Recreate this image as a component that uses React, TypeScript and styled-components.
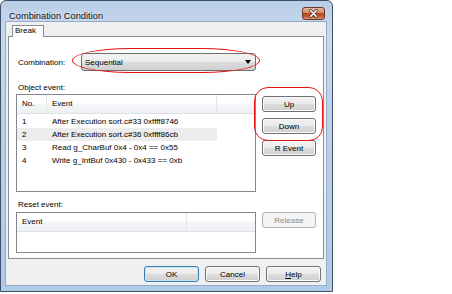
import React from "react";
import styled, { createGlobalStyle } from "styled-components";

const GlobalStyle = createGlobalStyle`
  html, body {
    margin: 0;
    padding: 0;
    background: #ffffff;
  }
  body {
    font-family: "Liberation Sans", Arial, sans-serif;
    font-size: 8px;
    color: #000;
  }
`;

type Row = { no: string; event: string };

const objectEvents: Row[] = [
  { no: "1", event: "After Execution sort.c#33 0xffff8746" },
  { no: "2", event: "After Execution sort.c#36 0xffff86cb" },
  { no: "3", event: "Read g_CharBuf 0x4 - 0x4 == 0x55" },
  { no: "4", event: "Write g_IntBuf 0x430 - 0x433 == 0xb" },
];

const CloseIcon = () => (
  <svg width="23" height="13" viewBox="0 0 23 13">
    <defs>
      <linearGradient id="closeBg" x1="0" y1="0" x2="0" y2="1">
        <stop offset="0" stopColor="#e6bba3" />
        <stop offset="0.42" stopColor="#d38f70" />
        <stop offset="0.5" stopColor="#b44722" />
        <stop offset="0.75" stopColor="#c25c38" />
        <stop offset="1" stopColor="#e3a585" />
      </linearGradient>
    </defs>
    <rect x="0.5" y="0.5" width="22" height="12" rx="2.5" fill="url(#closeBg)" stroke="#6b3a2a" />
    <path d="M8.5 3.5 L14.5 9.5 M14.5 3.5 L8.5 9.5" stroke="#4a2a20" strokeWidth="3" strokeLinecap="round" />
    <path d="M8.5 3.5 L14.5 9.5 M14.5 3.5 L8.5 9.5" stroke="#ffffff" strokeWidth="1.6" strokeLinecap="round" />
  </svg>
);

const App: React.FC = () => {
  return (
    <>
      <GlobalStyle />
      <Page>
        <Window>
          <TitleBar>
            <Title>Combination Condition</Title>
            <CloseButton>
              <CloseIcon />
            </CloseButton>
          </TitleBar>
          <Client>
            <TabStrip>
              <Tab>Break</Tab>
            </TabStrip>
            <Panel>
              <ComboRow>
                <ComboLabel>Combination:</ComboLabel>
                <Select>
                  <span>Sequential</span>
                  <Arrow />
                </Select>
              </ComboRow>

              <SectionLabel>Object event:</SectionLabel>
              <Section $gap={1}>
                <ListBox $height={98}>
                  <Header>
                    <HeadCell $width={30}>No.</HeadCell>
                    <HeadCell $width={170}>Event</HeadCell>
                    <HeadFill />
                  </Header>
                  <Rows>
                    {objectEvents.map((r, i) => (
                      <ItemRow key={r.no} $hover={i === 1}>
                        <Cell $width={30}>{r.no}</Cell>
                        <Cell $width={170}>{r.event}</Cell>
                      </ItemRow>
                    ))}
                  </Rows>
                </ListBox>
                <ButtonColumn $top={2}>
                  <Button>Up</Button>
                  <Button>Down</Button>
                  <Button>R Event</Button>
                </ButtonColumn>
              </Section>

              <SectionLabel $top={8}>Reset event:</SectionLabel>
              <Section $gap={2}>
                <ListBox $height={41}>
                  <Header>
                    <HeadCell $width={170}>Event</HeadCell>
                    <HeadFill />
                  </Header>
                </ListBox>
                <ButtonColumn $top={0}>
                  <Button disabled>Release</Button>
                </ButtonColumn>
              </Section>
            </Panel>

            <Footer>
              <Button $default>OK</Button>
              <Button>Cancel</Button>
              <Button>
                <u>H</u>elp
              </Button>
            </Footer>
          </Client>
        </Window>

        <Highlight $left={72} $top={48} $width={188} $height={25} $radius="60px / 13px" />
        <Highlight $left={254} $top={87} $width={69} $height={54} $radius="14px" />
      </Page>
    </>
  );
};

const Page = styled.div`
  position: relative;
  width: 452px;
  height: 294px;
  background: #fff;
`;

const Window = styled.div`
  box-sizing: border-box;
  width: 333px;
  height: 292px;
  display: flex;
  flex-direction: column;
  padding: 0 6px 6px 5px;
  border: 1px solid #3f5068;
  border-radius: 6px 6px 0 0;
  background: linear-gradient(180deg, #b9cee7 0%, #c9daee 12%, #bcd1e9 40%, #aecbe8 100%);
`;

const TitleBar = styled.div`
  height: 21px;
  display: flex;
  justify-content: space-between;
  align-items: flex-start;
  padding-left: 3px;
`;

const Title = styled.div`
  font-size: 9.3px;
  line-height: 10px;
  margin-top: 10px;
  color: #111;
  text-shadow: 0 0 4px rgba(255, 255, 255, 0.9);
`;

const CloseButton = styled.div`
  margin-top: 6px;
  margin-right: 1px;
  width: 23px;
  height: 13px;
  line-height: 0;
`;

const Client = styled.div`
  flex: 1;
  display: flex;
  flex-direction: column;
  background: #f0f0f0;
  padding: 3px 3px 3px 2px;
  box-shadow: 0 0 0 1px #93abc8;
`;

const TabStrip = styled.div`
  display: flex;
  height: 11px;
  padding-left: 4px;
`;

const Tab = styled.div`
  position: relative;
  z-index: 1;
  box-sizing: border-box;
  width: 32px;
  height: 12px;
  border: 1px solid #898c95;
  border-bottom: none;
  background: #fff;
  font-size: 8px;
  line-height: 10px;
  padding-left: 2px;
`;

const Panel = styled.div`
  box-sizing: border-box;
  width: 316px;
  height: 223px;
  border: 1px solid #898c95;
  background: #fff;
  padding: 16px 6px 0 7px;
  display: flex;
  flex-direction: column;
`;

const ComboRow = styled.div`
  display: flex;
  align-items: center;
  width: 240px;
  height: 18px;
`;

const ComboLabel = styled.div`
  width: 65px;
  padding-left: 2px;
  box-sizing: border-box;
`;

const Select = styled.div`
  box-sizing: border-box;
  width: 175px;
  height: 18px;
  display: flex;
  align-items: center;
  justify-content: space-between;
  padding: 0 4px 0 3px;
  border: 1px solid #707070;
  border-radius: 3px;
  background: linear-gradient(180deg, #f2f2f2 0%, #ebebeb 50%, #dddddd 51%, #cfcfcf 100%);
`;

const Arrow = styled.span`
  width: 0;
  height: 0;
  border-left: 3.5px solid transparent;
  border-right: 3.5px solid transparent;
  border-top: 4px solid #000;
`;

const SectionLabel = styled.div<{ $top?: number }>`
  margin-top: ${(p) => p.$top ?? 12}px;
  line-height: 10px;
  padding-left: 2px;
`;

const Section = styled.div<{ $gap: number }>`
  display: flex;
  gap: 6px;
  margin-top: ${(p) => p.$gap}px;
`;

const ListBox = styled.div<{ $height: number }>`
  box-sizing: border-box;
  width: 240px;
  height: ${(p) => p.$height}px;
  border: 1px solid #828790;
  background: #fff;
  overflow: hidden;
`;

const Header = styled.div`
  display: flex;
  height: 18px;
  background: linear-gradient(180deg, #ffffff 0%, #ffffff 45%, #f3f4f6 55%, #eef0f3 100%);
  border-bottom: 1px solid #dde0e5;
`;

const HeadCell = styled.div<{ $width: number }>`
  box-sizing: border-box;
  width: ${(p) => p.$width}px;
  padding-left: 5px;
  line-height: 18px;
  border-right: 1px solid #e3e5e8;
`;

const HeadFill = styled.div`
  flex: 1;
`;

const Rows = styled.div`
  padding-top: 1px;
`;

const ItemRow = styled.div<{ $hover?: boolean }>`
  display: flex;
  width: 200px;
  height: 13px;
  line-height: 13px;
  background: ${(p) => (p.$hover ? "#ececec" : "transparent")};
`;

const Cell = styled.div<{ $width: number }>`
  width: ${(p) => p.$width}px;
  padding-left: 5px;
  box-sizing: border-box;
  white-space: nowrap;
`;

const ButtonColumn = styled.div<{ $top: number }>`
  display: flex;
  flex-direction: column;
  gap: 6px;
  width: 54px;
  padding-top: ${(p) => p.$top}px;
`;

const Button = styled.button<{ $default?: boolean }>`
  box-sizing: border-box;
  width: 54px;
  height: 16px;
  padding: 0;
  font-family: "Liberation Sans", Arial, sans-serif;
  font-size: 8px;
  color: #000;
  border: 1px solid ${(p) => (p.$default ? "#3c7fb1" : "#707070")};
  border-radius: 3px;
  background: linear-gradient(180deg, #f2f2f2 0%, #ebebeb 50%, #dddddd 51%, #cfcfcf 100%);
  box-shadow: inset 0 0 0 1px ${(p) => (p.$default ? "#c4e5f6" : "#fbfbfb")};

  &:disabled {
    color: #8a8a8a;
    border-color: #adb2b5;
    background: #f4f4f4;
    box-shadow: none;
  }

  u {
    text-decoration: underline;
  }
`;

const Footer = styled.div`
  display: flex;
  justify-content: flex-end;
  gap: 6px;
  margin-top: 7px;
  padding-right: 2px;

  & > button {
    width: 55px;
  }
`;

const Highlight = styled.div<{
  $left: number;
  $top: number;
  $width: number;
  $height: number;
  $radius: string;
}>`
  position: absolute;
  left: ${(p) => p.$left}px;
  top: ${(p) => p.$top}px;
  width: ${(p) => p.$width}px;
  height: ${(p) => p.$height}px;
  box-sizing: border-box;
  border: 1px solid #e81010;
  border-radius: ${(p) => p.$radius};
  pointer-events: none;
`;

export default App;
